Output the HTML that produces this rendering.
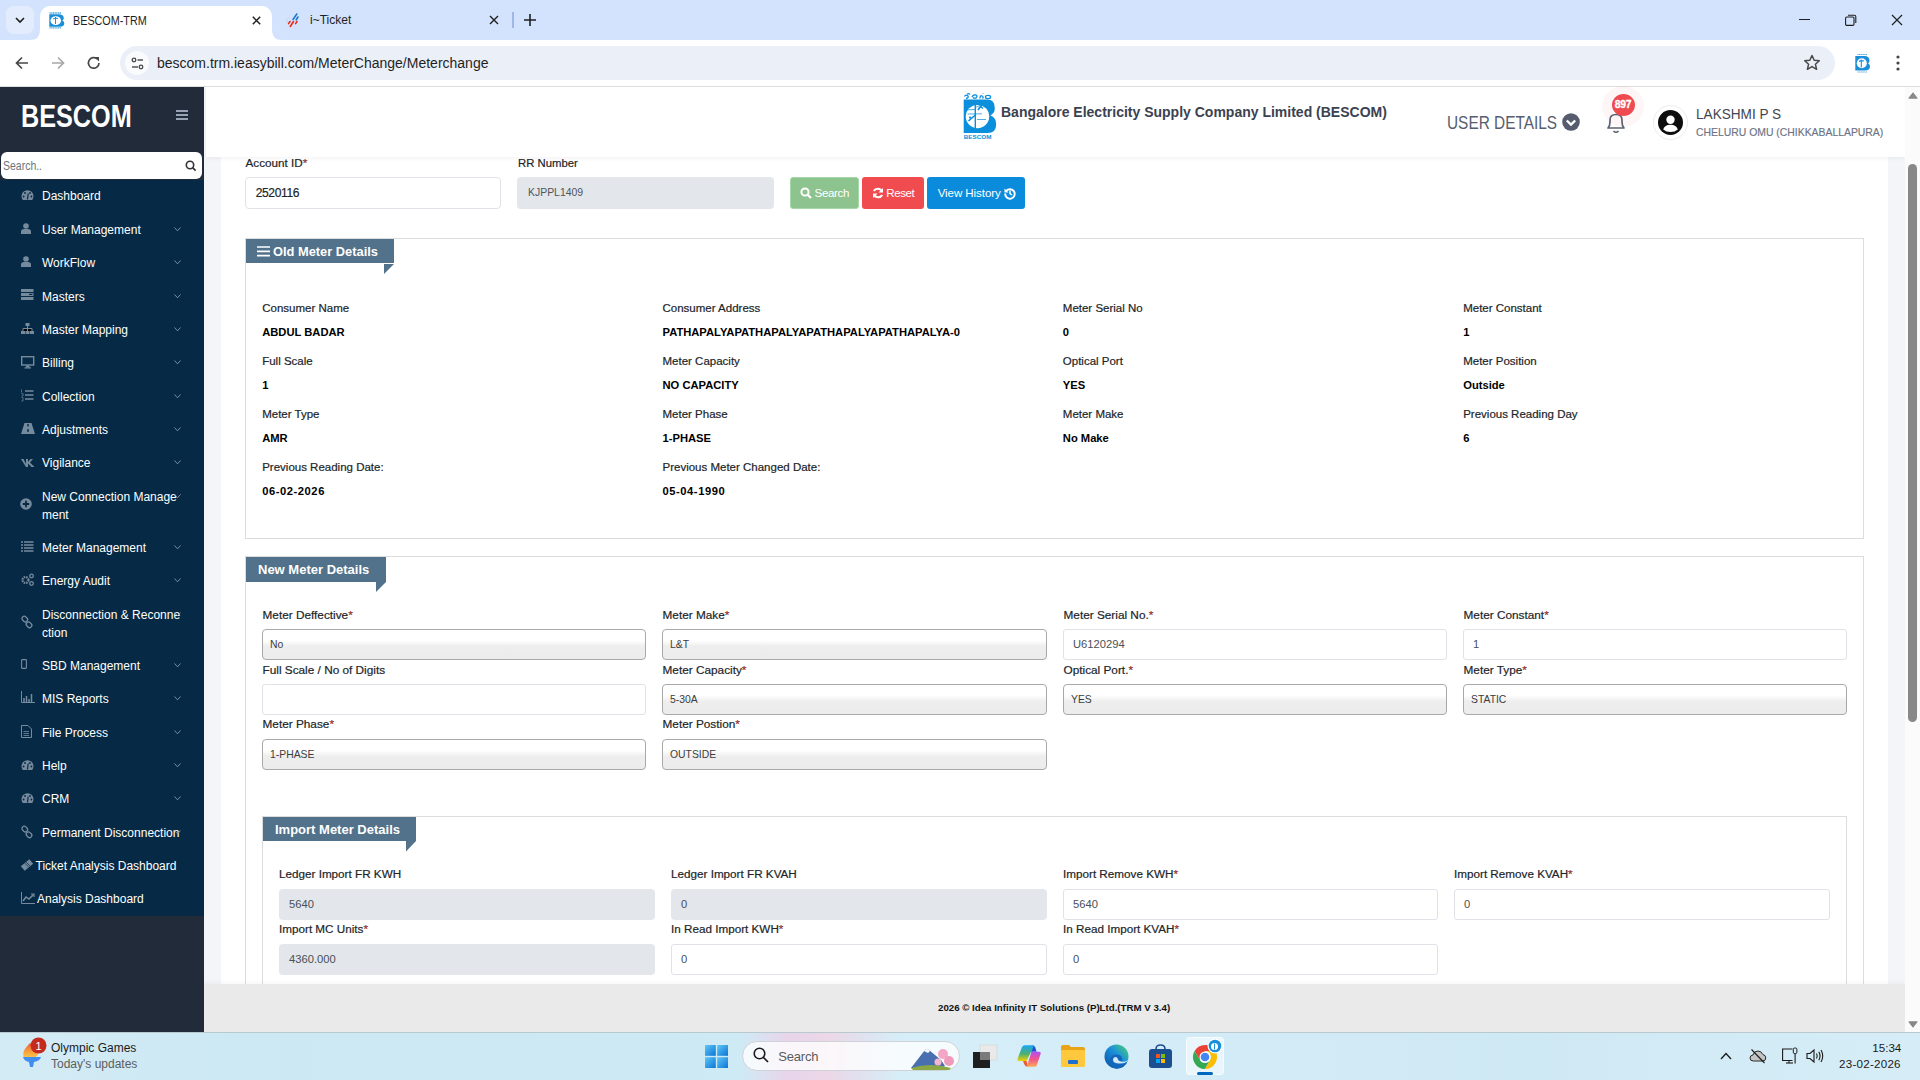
<!DOCTYPE html>
<html><head><meta charset="utf-8">
<style>
*{box-sizing:border-box;margin:0;padding:0}
html,body{width:1920px;height:1080px;overflow:hidden;font-family:"Liberation Sans",sans-serif;background:#fff;position:relative;color:#212529}
.a{position:absolute}
.t{position:absolute;white-space:nowrap;line-height:1}
svg{position:absolute;overflow:visible}
/* chrome */
#tabbar{left:0;top:0;width:1920px;height:40px;background:#d3e3fd}
#toolbar{left:0;top:40px;width:1920px;height:47px;background:#fff;border-bottom:1px solid #dcdfdc}
#omni{left:120px;top:46px;width:1715px;height:34px;border-radius:17px;background:#ebf0f8}
/* sidebar */
#sbtop{left:0;top:87px;width:204px;height:945px;background:#222b3a}
#sbmenu{left:0;top:180px;width:204px;height:736px;background:#062a45}
.mi{position:absolute;left:42px;color:#fff;font-size:12px;white-space:nowrap;line-height:18px}
.chev{position:absolute;left:173px;width:8px;height:5px}
/* main */
#main{left:204px;top:87px;width:1701px;height:897px;background:#f4f5f8}
#hdr{left:206px;top:87px;width:1699px;height:70px;background:#fff;box-shadow:0 2px 4px rgba(0,0,0,.045)}
#card{left:221px;top:157px;width:1667px;height:827px;background:#fff}
#footer{left:204px;top:984px;width:1701px;height:48px;background:#eaeaea;box-shadow:0 -2px 4px rgba(0,0,0,.035)}
#sbtrack{left:1905px;top:87px;width:15px;height:945px;background:#fbfbfb}
#taskbar{left:0;top:1032px;width:1920px;height:48px;background:linear-gradient(90deg,#d3ebf5 0%,#cbe8f3 15%,#cce9f4 35%,#d6eef8 48%,#d3ecf7 60%,#cfe9f4 80%,#d6edf7 100%)}
</style></head>
<body>
<!-- ============ CHROME ============ -->
<div id="tabbar" class="a"></div>
<div class="a" style="left:6px;top:6px;width:28px;height:28px;border-radius:8px;background:#e3ecfc"></div>
<svg style="left:15px;top:17px" width="10" height="6"><path d="M1 1 L5 5 L9 1" stroke="#1f1f1f" stroke-width="1.6" fill="none"/></svg>
<!-- active tab -->
<div class="a" style="left:40px;top:6px;width:232px;height:40px;background:#fff;border-radius:10px 10px 0 0"></div>
<svg style="left:30px;top:30px" width="10" height="10"><path d="M0 10 Q10 10 10 0 L10 10 Z" fill="#fff"/></svg>
<svg style="left:272px;top:30px" width="10" height="10"><path d="M0 0 Q0 10 10 10 L0 10 Z" fill="#fff"/></svg>
<svg style="left:48.5px;top:12px" width="16" height="17"><path d="M0.5 1 H12" stroke="#1a8fd8" stroke-width="1.3" stroke-dasharray="1.2 0.5" opacity="0.8"/><path d="M0.3 2.3 H9.5 Q14.8 2.3 14.8 6.3 Q14.8 7.8 13.4 8.4 Q15.3 9.2 15.3 11.3 Q15.3 14.8 10.5 14.8 H0.3 Z" fill="#1a8fd8"/><ellipse cx="6.8" cy="8.6" rx="5.3" ry="4.4" fill="#fff"/><path d="M6.5 5 V12 M4 7 Q6 5.5 9 6.5" stroke="#1a8fd8" stroke-width="1" fill="none"/><path d="M0.5 15.8 H12" stroke="#1a8fd8" stroke-width="1.3" stroke-dasharray="1.2 0.5" opacity="0.8"/></svg>
<div class="t" style="left:72.5px;top:14.6px;font-size:12.2px;color:#1f1f1f;transform:scaleX(0.885);transform-origin:0 0">BESCOM-TRM</div>
<svg style="left:251.5px;top:15.5px" width="9" height="9"><path d="M0.8 0.8 L8.2 8.2 M8.2 0.8 L0.8 8.2" stroke="#1f1f1f" stroke-width="1.5"/></svg>
<!-- tab 2 -->
<svg style="left:286px;top:12px" width="14" height="16"><path d="M3 5.5 Q0 7 1 11" stroke="#ccc" stroke-width="0.8" fill="none"/><path d="M10.8 2 L7 7.5 M12 5 L10.2 7.8" stroke="#1f78d1" stroke-width="1.6" stroke-linecap="round"/><path d="M4 9.5 L2.6 11.6 M7.5 9.5 L4.3 14.5 M11 9.5 L9.6 11.6" stroke="#ee2a1b" stroke-width="1.6" stroke-linecap="round"/></svg>
<div class="t" style="left:310px;top:14px;font-size:12px;color:#1f1f1f">i~Ticket</div>
<svg style="left:489px;top:15px" width="10" height="10"><path d="M1 1 L9 9 M9 1 L1 9" stroke="#1f1f1f" stroke-width="1.4"/></svg>
<div class="a" style="left:512px;top:12px;width:1.5px;height:16px;background:#9fb8e6"></div>
<svg style="left:524px;top:14px" width="12" height="12"><path d="M6 0 V12 M0 6 H12" stroke="#1f1f1f" stroke-width="1.6"/></svg>
<!-- window controls -->
<div class="a" style="left:1799px;top:19px;width:11px;height:1.2px;background:#1f1f1f"></div>
<svg style="left:1845px;top:14px" width="12" height="12"><rect x="0.6" y="3" width="8.4" height="8.4" rx="1.2" stroke="#1f1f1f" stroke-width="1.1" fill="none"/><path d="M3 1.2 H9.5 Q10.8 1.2 10.8 2.5 V9" stroke="#1f1f1f" stroke-width="1.1" fill="none"/></svg>
<svg style="left:1891px;top:14px" width="12" height="12"><path d="M1 1 L11 11 M11 1 L1 11" stroke="#1f1f1f" stroke-width="1.2"/></svg>

<!-- toolbar -->
<div id="toolbar" class="a" style="border-radius:10px 10px 0 0"></div>
<svg style="left:15px;top:56px" width="14" height="14"><path d="M13 7 H2 M7 1.5 L1.5 7 L7 12.5" stroke="#474747" stroke-width="1.7" fill="none"/></svg>
<svg style="left:51px;top:56px" width="14" height="14"><path d="M1 7 H12 M7 1.5 L12.5 7 L7 12.5" stroke="#a8a8a8" stroke-width="1.7" fill="none"/></svg>
<svg style="left:87px;top:56px" width="14" height="14"><path d="M12 7 A5.3 5.3 0 1 1 10.3 3" stroke="#474747" stroke-width="1.7" fill="none"/><path d="M7.5 1 H12 V5.5 Z" fill="#474747"/></svg>
<div id="omni" class="a"></div>
<div class="a" style="left:125px;top:51px;width:24px;height:24px;border-radius:12px;background:#fafbfd"></div>
<svg style="left:131px;top:57px" width="13" height="13"><circle cx="3" cy="3" r="1.8" stroke="#474747" stroke-width="1.3" fill="none"/><path d="M6.5 3 H12" stroke="#474747" stroke-width="1.4"/><circle cx="10" cy="10" r="1.8" stroke="#474747" stroke-width="1.3" fill="none"/><path d="M1 10 H7" stroke="#474747" stroke-width="1.4"/></svg>
<div class="t" style="left:157px;top:56px;font-size:14px;color:#1f1f1f">bescom.trm.ieasybill.com/MeterChange/Meterchange</div>
<svg style="left:1803px;top:54px" width="18" height="18"><path d="M9 1.5 L11.2 6.3 L16.3 6.8 L12.4 10.2 L13.6 15.3 L9 12.6 L4.4 15.3 L5.6 10.2 L1.7 6.8 L6.8 6.3 Z" stroke="#474747" stroke-width="1.5" fill="none" stroke-linejoin="round"/></svg>
<svg style="left:1854.5px;top:53px" width="16" height="20"><path d="M2.5 1.5 H12" stroke="#1a8fd8" stroke-width="1.2" stroke-dasharray="1.2 0.5" opacity="0.8"/><path d="M0.3 3 H9.5 Q14.5 3 14.5 7.8 Q14.5 9.4 13 10.2 Q15 11.2 15 13.5 Q15 17.5 10 17.5 H0.3 Z" fill="#1a8fd8"/><ellipse cx="6.8" cy="10.3" rx="5" ry="5" fill="#fff"/><path d="M6.3 6.5 V14.5 M4 8.5 Q6 7 9 8" stroke="#1a8fd8" stroke-width="1.1" fill="none"/><path d="M2.5 19 H12" stroke="#1a8fd8" stroke-width="1.1" stroke-dasharray="1.2 0.5" opacity="0.7"/></svg>
<svg style="left:1896px;top:55px" width="4" height="16"><circle cx="2" cy="2" r="1.6" fill="#474747"/><circle cx="2" cy="8" r="1.6" fill="#474747"/><circle cx="2" cy="14" r="1.6" fill="#474747"/></svg>

<!-- ============ SIDEBAR ============ -->
<div id="sbtop" class="a"></div>
<div id="sbmenu" class="a"></div>
<div class="t" style="left:20.5px;top:101.3px;font-size:31px;font-weight:700;color:#fff;transform:scaleX(0.813);transform-origin:0 0">BESCOM</div>
<svg style="left:176px;top:110px" width="12" height="10"><path d="M0 1 H12 M0 5 H12 M0 9 H12" stroke="#97a3b4" stroke-width="1.8"/></svg>
<div class="a" style="left:1px;top:151.8px;width:201px;height:27.4px;background:#fff;border-radius:6px"></div>
<div class="t" style="left:2.8px;top:160px;font-size:12.2px;color:#6c757d;transform:scaleX(0.86);transform-origin:0 0">Search..</div>
<svg style="left:185px;top:160px" width="12" height="12"><circle cx="5" cy="5" r="3.7" stroke="#333" stroke-width="1.6" fill="none"/><path d="M7.6 7.6 L10.6 10.6" stroke="#333" stroke-width="1.6"/></svg>
<!--MENU--><div class="t" style="left:42px;top:189.8px;font-size:12px;color:#fff">Dashboard</div>
<svg style="left:21px;top:190.0px" width="13" height="10"><path d="M1.8 10 A6 6 0 1 1 11.2 10 Z" fill="#768a9e"/><circle cx="2.6" cy="6.5" r="0.9" fill="#062a45"/><circle cx="4" cy="3" r="0.9" fill="#062a45"/><circle cx="9" cy="3" r="0.9" fill="#062a45"/><circle cx="10.4" cy="6.5" r="0.9" fill="#062a45"/><path d="M6.5 9.5 L7.2 3.5" stroke="#062a45" stroke-width="1.2"/></svg>
<div class="t" style="left:42px;top:223.8px;font-size:12px;color:#fff">User Management</div>
<svg style="left:21px;top:223.0px" width="10" height="11"><circle cx="5" cy="3" r="2.8" fill="#768a9e"/><path d="M0 11 V8.5 Q0 6 3 6 H7 Q10 6 10 8.5 V11 Z" fill="#768a9e"/></svg>
<svg style="left:174px;top:226.8px" width="7" height="5"><path d="M0.5 0.5 L3.5 3.8 L6.5 0.5" stroke="#8298ad" stroke-width="0.9" fill="none"/></svg>
<div class="t" style="left:42px;top:256.8px;font-size:12px;color:#fff">WorkFlow</div>
<svg style="left:21px;top:256.0px" width="10" height="11"><circle cx="5" cy="3" r="2.8" fill="#768a9e"/><path d="M0 11 V8.5 Q0 6 3 6 H7 Q10 6 10 8.5 V11 Z" fill="#768a9e"/></svg>
<svg style="left:174px;top:259.8px" width="7" height="5"><path d="M0.5 0.5 L3.5 3.8 L6.5 0.5" stroke="#8298ad" stroke-width="0.9" fill="none"/></svg>
<div class="t" style="left:42px;top:290.5px;font-size:12px;color:#fff">Masters</div>
<svg style="left:21px;top:289.2px" width="13" height="11"><rect x="0" y="0" width="12.5" height="3" fill="#768a9e"/><rect x="0" y="4" width="12.5" height="3" fill="#768a9e"/><rect x="0" y="8" width="12.5" height="3" fill="#768a9e"/><rect x="8" y="4.8" width="3.5" height="1.2" fill="#062a45"/></svg>
<svg style="left:174px;top:293.5px" width="7" height="5"><path d="M0.5 0.5 L3.5 3.8 L6.5 0.5" stroke="#8298ad" stroke-width="0.9" fill="none"/></svg>
<div class="t" style="left:42px;top:323.5px;font-size:12px;color:#fff">Master Mapping</div>
<svg style="left:21px;top:322.7px" width="13" height="11"><rect x="4.5" y="0" width="4" height="3" fill="#768a9e"/><path d="M6.5 3 V5 M2 8 V5.5 H11 V8 M6.5 5 V8" stroke="#768a9e" stroke-width="1"/><rect x="0" y="8" width="4" height="3" fill="#768a9e"/><rect x="4.5" y="8" width="4" height="3" fill="#768a9e"/><rect x="9" y="8" width="4" height="3" fill="#768a9e"/></svg>
<svg style="left:174px;top:326.5px" width="7" height="5"><path d="M0.5 0.5 L3.5 3.8 L6.5 0.5" stroke="#8298ad" stroke-width="0.9" fill="none"/></svg>
<div class="t" style="left:42px;top:356.8px;font-size:12px;color:#fff">Billing</div>
<svg style="left:21px;top:355.5px" width="14" height="13"><rect x="0.7" y="0.7" width="12" height="8.3" stroke="#768a9e" stroke-width="1.4" fill="none"/><rect x="5" y="9.5" width="3.5" height="2" fill="#768a9e"/><rect x="3.5" y="11.3" width="6.5" height="1.2" fill="#768a9e"/></svg>
<svg style="left:174px;top:359.8px" width="7" height="5"><path d="M0.5 0.5 L3.5 3.8 L6.5 0.5" stroke="#8298ad" stroke-width="0.9" fill="none"/></svg>
<div class="t" style="left:42px;top:390.5px;font-size:12px;color:#fff">Collection</div>
<svg style="left:21px;top:389.2px" width="13" height="13"><path d="M4 2 H12.5 M4 6 H12.5 M4 10 H12.5" stroke="#768a9e" stroke-width="1.6"/><path d="M0.5 0.5 V3.5 M0.5 4.5 H2 V7 H0.5 M0.5 8.5 H2 V12 H0.5" stroke="#768a9e" stroke-width="0.7" fill="none"/></svg>
<svg style="left:174px;top:393.5px" width="7" height="5"><path d="M0.5 0.5 L3.5 3.8 L6.5 0.5" stroke="#8298ad" stroke-width="0.9" fill="none"/></svg>
<div class="t" style="left:42px;top:423.5px;font-size:12px;color:#fff">Adjustments</div>
<svg style="left:21px;top:422.7px" width="14" height="11"><path d="M3.5 0 H10.5 L14 11 H0 Z" fill="#768a9e"/><rect x="6.3" y="1" width="1.4" height="2.5" fill="#062a45"/><rect x="6.3" y="6" width="1.4" height="3" fill="#062a45"/></svg>
<svg style="left:174px;top:426.5px" width="7" height="5"><path d="M0.5 0.5 L3.5 3.8 L6.5 0.5" stroke="#8298ad" stroke-width="0.9" fill="none"/></svg>
<div class="t" style="left:42px;top:456.8px;font-size:12px;color:#fff">Vigilance</div>
<svg style="left:21px;top:458.5px" width="14" height="8"><path d="M0 0 H2.5 L5 5 V0 H7 V3 L9.5 0 H12 L9 3.5 L13.5 8 H10.5 L7 4.5 V8 H5 Z" fill="#768a9e"/></svg>
<svg style="left:174px;top:459.8px" width="7" height="5"><path d="M0.5 0.5 L3.5 3.8 L6.5 0.5" stroke="#8298ad" stroke-width="0.9" fill="none"/></svg>
<div class="mi" style="left:42px;top:487.8px">New Connection Manage<br>ment</div>
<svg style="left:20px;top:498.0px" width="12" height="12"><circle cx="6" cy="6" r="5.8" fill="#768a9e"/><path d="M6 2.8 V9.2 M2.8 6 H9.2" stroke="#062a45" stroke-width="1.8"/></svg>
<svg style="left:174px;top:493.8px" width="7" height="5"><path d="M0.5 0.5 L3.5 3.8 L6.5 0.5" stroke="#8298ad" stroke-width="0.9" fill="none"/></svg>
<div class="t" style="left:42px;top:541.8px;font-size:12px;color:#fff">Meter Management</div>
<svg style="left:21px;top:540.5px" width="13" height="12"><path d="M0 1 H2 M0 4 H2 M0 7 H2 M0 10 H2 M3 1 H12.5 M3 4 H12.5 M3 7 H12.5 M3 10 H12.5" stroke="#768a9e" stroke-width="1.6"/></svg>
<svg style="left:174px;top:544.8px" width="7" height="5"><path d="M0.5 0.5 L3.5 3.8 L6.5 0.5" stroke="#8298ad" stroke-width="0.9" fill="none"/></svg>
<div class="t" style="left:42px;top:574.8px;font-size:12px;color:#fff">Energy Audit</div>
<svg style="left:21px;top:573.0px" width="13" height="13"><circle cx="4.5" cy="7" r="3" stroke="#768a9e" stroke-width="2.2" fill="none" stroke-dasharray="1.6 0.8"/><circle cx="10.5" cy="3" r="1.8" stroke="#768a9e" stroke-width="1.3" fill="none"/><circle cx="10.5" cy="10.5" r="1.8" stroke="#768a9e" stroke-width="1.3" fill="none"/></svg>
<svg style="left:174px;top:577.8px" width="7" height="5"><path d="M0.5 0.5 L3.5 3.8 L6.5 0.5" stroke="#8298ad" stroke-width="0.9" fill="none"/></svg>
<div class="mi" style="left:42px;top:605.8px">Disconnection &amp; Reconne<br>ction</div>
<svg style="left:21px;top:616.0px" width="12" height="12"><rect x="0.8" y="0.8" width="6" height="4.5" rx="2.2" transform="rotate(45 3.8 3)" stroke="#768a9e" stroke-width="1.3" fill="none"/><rect x="5" y="6.5" width="6" height="4.5" rx="2.2" transform="rotate(45 8 8.8)" stroke="#768a9e" stroke-width="1.3" fill="none"/></svg>
<svg style="left:174px;top:611.8px" width="7" height="5"><path d="M0.5 0.5 L3.5 3.8 L6.5 0.5" stroke="#8298ad" stroke-width="0.9" fill="none"/></svg>
<div class="t" style="left:42px;top:659.8px;font-size:12px;color:#fff">SBD Management</div>
<svg style="left:21px;top:659.0px" width="6" height="10"><rect x="0.6" y="0.6" width="4.8" height="8.8" rx="0.6" stroke="#768a9e" stroke-width="1.1" fill="none"/></svg>
<svg style="left:174px;top:662.8px" width="7" height="5"><path d="M0.5 0.5 L3.5 3.8 L6.5 0.5" stroke="#8298ad" stroke-width="0.9" fill="none"/></svg>
<div class="t" style="left:42px;top:692.8px;font-size:12px;color:#fff">MIS Reports</div>
<svg style="left:21px;top:691.0px" width="14" height="12"><path d="M0.5 0 V11.5 H14" stroke="#768a9e" stroke-width="1" fill="none"/><path d="M3 11 V7 M5.5 11 V5 M8 11 V8 M10.5 11 V3" stroke="#768a9e" stroke-width="1.5"/></svg>
<svg style="left:174px;top:695.8px" width="7" height="5"><path d="M0.5 0.5 L3.5 3.8 L6.5 0.5" stroke="#8298ad" stroke-width="0.9" fill="none"/></svg>
<div class="t" style="left:42px;top:726.8px;font-size:12px;color:#fff">File Process</div>
<svg style="left:21px;top:725.0px" width="11" height="13"><path d="M0.5 0.5 H7 L10.5 4 V12.5 H0.5 Z" stroke="#768a9e" stroke-width="1" fill="none"/><path d="M2.5 6.5 H8 M2.5 8.5 H8 M2.5 10.5 H8" stroke="#768a9e" stroke-width="0.8"/></svg>
<svg style="left:174px;top:729.8px" width="7" height="5"><path d="M0.5 0.5 L3.5 3.8 L6.5 0.5" stroke="#8298ad" stroke-width="0.9" fill="none"/></svg>
<div class="t" style="left:42px;top:759.8px;font-size:12px;color:#fff">Help</div>
<svg style="left:21px;top:760.0px" width="13" height="10"><path d="M1.8 10 A6 6 0 1 1 11.2 10 Z" fill="#768a9e"/><circle cx="2.6" cy="6.5" r="0.9" fill="#062a45"/><circle cx="4" cy="3" r="0.9" fill="#062a45"/><circle cx="9" cy="3" r="0.9" fill="#062a45"/><circle cx="10.4" cy="6.5" r="0.9" fill="#062a45"/><path d="M6.5 9.5 L7.2 3.5" stroke="#062a45" stroke-width="1.2"/></svg>
<svg style="left:174px;top:762.8px" width="7" height="5"><path d="M0.5 0.5 L3.5 3.8 L6.5 0.5" stroke="#8298ad" stroke-width="0.9" fill="none"/></svg>
<div class="t" style="left:42px;top:792.8px;font-size:12px;color:#fff">CRM</div>
<svg style="left:21px;top:793.0px" width="13" height="10"><path d="M1.8 10 A6 6 0 1 1 11.2 10 Z" fill="#768a9e"/><circle cx="2.6" cy="6.5" r="0.9" fill="#062a45"/><circle cx="4" cy="3" r="0.9" fill="#062a45"/><circle cx="9" cy="3" r="0.9" fill="#062a45"/><circle cx="10.4" cy="6.5" r="0.9" fill="#062a45"/><path d="M6.5 9.5 L7.2 3.5" stroke="#062a45" stroke-width="1.2"/></svg>
<svg style="left:174px;top:795.8px" width="7" height="5"><path d="M0.5 0.5 L3.5 3.8 L6.5 0.5" stroke="#8298ad" stroke-width="0.9" fill="none"/></svg>
<div class="t" style="left:42px;top:826.8px;font-size:12px;color:#fff">Permanent Disconnection</div>
<svg style="left:21px;top:825.5px" width="12" height="12"><rect x="0.8" y="0.8" width="6" height="4.5" rx="2.2" transform="rotate(45 3.8 3)" stroke="#768a9e" stroke-width="1.3" fill="none"/><rect x="5" y="6.5" width="6" height="4.5" rx="2.2" transform="rotate(45 8 8.8)" stroke="#768a9e" stroke-width="1.3" fill="none"/></svg>
<svg style="left:174px;top:829.8px" width="7" height="5"><path d="M0.5 0.5 L3.5 3.8 L6.5 0.5" stroke="#8298ad" stroke-width="0.9" fill="none"/></svg>
<div class="t" style="left:35.5px;top:859.8px;font-size:12px;color:#fff">Ticket Analysis Dashboard</div>
<svg style="left:21px;top:858.5px" width="12" height="12"><rect x="0.5" y="3" width="11" height="6" transform="rotate(-40 6 6)" fill="#768a9e"/><path d="M3.8 4.2 L7.8 8.2 M5 3 L9 7" stroke="#062a45" stroke-width="0.7"/></svg>
<div class="t" style="left:37px;top:892.8px;font-size:12px;color:#fff">Analysis Dashboard</div>
<svg style="left:21px;top:892.0px" width="14" height="12"><path d="M0.5 0 V11.5 H14" stroke="#768a9e" stroke-width="1" fill="none"/><path d="M2 9 L5 5 L8 7 L12.5 2.5" stroke="#768a9e" stroke-width="1.5" fill="none"/><path d="M10 2 H13 V5" stroke="#768a9e" stroke-width="1.2" fill="none"/></svg><!--/MENU-->

<!-- ============ MAIN ============ -->
<div id="main" class="a"></div>
<div id="card" class="a"></div>
<div id="hdr" class="a"></div>
<!--HEADER-->
<!--CONTENT--><svg style="left:963px;top:93px" width="36" height="48">
<g fill="none" stroke="#0a8fdc" stroke-width="1.3">
<path d="M1.5 3.5 Q3 1 5 3 Q6 5 3 5.5 M4 1 Q6 0 7 1.5"/>
<path d="M9 4 Q10 1.5 13 2 Q15 3 13 5 Q11 5.5 10 4.5"/>
<path d="M17 5.5 Q17 2 19 3 Q21 4 19.5 5.5 M20 1 V0.5"/>
<ellipse cx="25" cy="4" rx="2.6" ry="1.6"/>
</g>
<path d="M0.7 6.6 H24.5 Q31.8 6.6 31.8 15.2 Q31.8 20 27.4 22.4 Q33.2 24.5 33.2 31.2 Q33.2 40.1 24.5 40.1 H0.7 Z" fill="#0a8fdc"/>
<circle cx="14.5" cy="23.6" r="11.7" fill="#fff"/>
<path d="M12.3 11.8 V35.3" stroke="#0a8fdc" stroke-width="1.4"/>
<path d="M4 16.8 L12 16.5 M4.5 21 L19 20.8 M14 26.5 H23 M12.5 14.5 L18 12" stroke="#0a8fdc" stroke-width="0.9" opacity="0.8"/>
<path d="M5.5 28 L10 24 L13 21.5 M15 17 L17.5 13.5 L20 15.5" stroke="#0a8fdc" stroke-width="1.6" fill="none"/>
<circle cx="7" cy="24.5" r="1.1" fill="#0a8fdc"/><circle cx="18" cy="12.5" r="1.1" fill="#0a8fdc"/>
<text x="0.7" y="45.9" font-size="5.9" font-family="Liberation Sans" font-weight="700" fill="#0a8fdc" textLength="27.7" lengthAdjust="spacingAndGlyphs">BESCOM</text>
</svg>
<div class="t" style="left:1001px;top:104.95px;font-size:14px;font-weight:700;color:#3b4250;">Bangalore Electricity Supply Company Limited (BESCOM)</div>
<div class="t" style="left:1447px;top:113.56px;font-size:18.6px;color:#575d6e;transform:scaleX(0.828);transform-origin:0 0">USER DETAILS</div>
<svg style="left:1562px;top:112.5px" width="18" height="18"><circle cx="9" cy="9" r="8.8" fill="#565c6d"/><path d="M4.8 7.5 L9 11.5 L13.2 7.5" stroke="#fff" stroke-width="2.4" fill="none"/></svg>
<div class="a" style="left:1602px;top:86px;width:42px;height:41px;border-radius:50%;background:rgba(240,80,80,0.05)"></div>
<svg style="left:1605px;top:110px" width="22" height="24"><path d="M3 18 Q5 16 5 12 V10 Q5 4.5 11 4.5 Q17 4.5 17 10 V12 Q17 16 19 18 Z" stroke="#5b6172" stroke-width="1.7" fill="none" stroke-linejoin="round"/><path d="M8.5 21 Q11 23.5 13.5 21" stroke="#5b6172" stroke-width="1.6" fill="none"/></svg>
<div class="a" style="left:1612px;top:94px;width:23px;height:22px;border-radius:50%;background:#ef4a50"></div>
<div class="t" style="left:1614.8px;top:100.28px;font-size:10.3px;font-weight:700;color:#fff;letter-spacing:-0.3px;-webkit-text-stroke:0.35px #fff">897</div>
<div class="a" style="left:1652.5px;top:104.5px;width:35px;height:35px;border-radius:50%;border:1px solid #ececec;background:#fff"></div>
<svg style="left:1657.5px;top:109.5px" width="25" height="25"><circle cx="12.5" cy="12.5" r="12.5" fill="#0d0d0d"/><circle cx="12.5" cy="9.8" r="4.2" fill="#fff"/><path d="M5.2 19.5 Q6.5 14.8 12.5 14.8 Q18.5 14.8 19.8 19.5 Q16.8 22 12.5 22 Q8.2 22 5.2 19.5 Z" fill="#fff"/></svg>
<div class="t" style="left:1696px;top:107.41px;font-size:14.4px;color:#3f4552;transform:scaleX(0.945);transform-origin:0 0">LAKSHMI P S</div>
<div class="t" style="left:1696px;top:127.37px;font-size:10.9px;color:#6c7284;transform:scaleX(0.955);transform-origin:0 0;-webkit-text-stroke:0.15px #6c7284">CHELURU OMU (CHIKKABALLAPURA)</div>
<div class="t" style="left:245.5px;top:156.70px;font-size:11.7px;color:#212529;;-webkit-text-stroke:0.2px #212529">Account ID<span style="color:#e3342f">*</span></div>
<div class="a" style="left:245px;top:177px;width:256px;height:32px;border:1px solid #dfe3e8;border-radius:4px;background:#fff"></div>
<div class="t" style="left:255.7px;top:187.14px;font-size:12px;color:#212529;letter-spacing:-0.35px;-webkit-text-stroke:0.2px #212529">2520116</div>
<div class="t" style="left:517.5px;top:156.70px;font-size:11.7px;color:#212529;transform:scaleX(0.97);transform-origin:0 0;-webkit-text-stroke:0.2px #212529">RR Number</div>
<div class="a" style="left:517px;top:177px;width:257px;height:32px;border-radius:4px;background:#e3e6ea"></div>
<div class="t" style="left:527.5px;top:187.21px;font-size:11.8px;color:#50555c;transform:scaleX(0.885);transform-origin:0 0">KJPPL1409</div>
<div class="a" style="left:790px;top:177px;width:69px;height:32px;border-radius:3px;background:#8dc38f;border:1px solid #a6d8a8"></div>
<svg style="left:800px;top:187px" width="12" height="12"><circle cx="5" cy="5" r="3.6" stroke="#fff" stroke-width="2" fill="none"/><path d="M7.6 7.6 L11 11" stroke="#fff" stroke-width="2.2"/></svg>
<div class="t" style="left:814.5px;top:187.18px;font-size:11.6px;color:#fff;letter-spacing:-0.35px">Search</div>
<div class="a" style="left:862px;top:177px;width:62px;height:32px;border-radius:3px;background:#f04b4f"></div>
<svg style="left:872px;top:187px" width="12" height="12"><path d="M10 4.5 A4.6 4.6 0 0 0 1.8 4" stroke="#fff" stroke-width="2" fill="none"/><path d="M11 1 V5.5 H6.5 Z" fill="#fff"/><path d="M2 7.5 A4.6 4.6 0 0 0 10.2 8" stroke="#fff" stroke-width="2" fill="none"/><path d="M1 11 V6.5 H5.5 Z" fill="#fff"/></svg>
<div class="t" style="left:886.3px;top:187.18px;font-size:11.6px;color:#fff;letter-spacing:-0.45px">Reset</div>
<div class="a" style="left:927px;top:177px;width:98px;height:32px;border-radius:3px;background:#0b8bdb"></div>
<div class="t" style="left:937.7px;top:187.18px;font-size:11.6px;color:#fff;letter-spacing:-0.1px">View History</div>
<svg style="left:1003.5px;top:186.5px" width="12" height="12"><path d="M2.2 4 A4.8 4.8 0 1 1 1.2 6.5" stroke="#fff" stroke-width="2" fill="none"/><path d="M0.5 1.5 V5.5 H4.5 Z" fill="#fff"/><path d="M6 3.5 V6.5 L8 8" stroke="#fff" stroke-width="1.5" fill="none"/></svg>
<div class="a" style="left:245px;top:238px;width:1619px;height:301px;border:1px solid #dcdcdc"></div>
<div class="a" style="left:246px;top:239px;width:148px;height:24px;background:#52718a"></div>
<svg style="left:384px;top:264px" width="10" height="10"><path d="M0 0 H10 L0 10 Z" fill="#52718a"/></svg>
<svg style="left:257.3px;top:245.8px" width="13" height="11"><path d="M0 1 H13 M0 5.3 H13 M0 9.6 H13" stroke="#fff" stroke-width="1.7"/></svg>
<div class="t" style="left:273.1px;top:244.74px;font-size:13.3px;font-weight:700;color:#fff;transform:scaleX(0.966);transform-origin:0 0">Old Meter Details</div>
<div class="t" style="left:262.2px;top:302.67px;font-size:11.5px;color:#212529;;-webkit-text-stroke:0.2px #212529">Consumer Name</div>
<div class="t" style="left:262.2px;top:326.92px;font-size:11.2px;font-weight:700;color:#000;">ABDUL BADAR</div>
<div class="t" style="left:662.5px;top:302.67px;font-size:11.5px;color:#212529;;-webkit-text-stroke:0.2px #212529">Consumer Address</div>
<div class="t" style="left:662.5px;top:326.92px;font-size:11.2px;font-weight:700;color:#000;">PATHAPALYAPATHAPALYAPATHAPALYAPATHAPALYA-0</div>
<div class="t" style="left:1062.8px;top:302.67px;font-size:11.5px;color:#212529;;-webkit-text-stroke:0.2px #212529">Meter Serial No</div>
<div class="t" style="left:1062.8px;top:326.92px;font-size:11.2px;font-weight:700;color:#000;">0</div>
<div class="t" style="left:1463.2px;top:302.67px;font-size:11.5px;color:#212529;;-webkit-text-stroke:0.2px #212529">Meter Constant</div>
<div class="t" style="left:1463.2px;top:326.92px;font-size:11.2px;font-weight:700;color:#000;">1</div>
<div class="t" style="left:262.2px;top:355.67px;font-size:11.5px;color:#212529;;-webkit-text-stroke:0.2px #212529">Full Scale</div>
<div class="t" style="left:262.2px;top:379.92px;font-size:11.2px;font-weight:700;color:#000;">1</div>
<div class="t" style="left:662.5px;top:355.67px;font-size:11.5px;color:#212529;;-webkit-text-stroke:0.2px #212529">Meter Capacity</div>
<div class="t" style="left:662.5px;top:379.92px;font-size:11.2px;font-weight:700;color:#000;">NO CAPACITY</div>
<div class="t" style="left:1062.8px;top:355.67px;font-size:11.5px;color:#212529;;-webkit-text-stroke:0.2px #212529">Optical Port</div>
<div class="t" style="left:1062.8px;top:379.92px;font-size:11.2px;font-weight:700;color:#000;">YES</div>
<div class="t" style="left:1463.2px;top:355.67px;font-size:11.5px;color:#212529;;-webkit-text-stroke:0.2px #212529">Meter Position</div>
<div class="t" style="left:1463.2px;top:379.92px;font-size:11.2px;font-weight:700;color:#000;">Outside</div>
<div class="t" style="left:262.2px;top:408.67px;font-size:11.5px;color:#212529;;-webkit-text-stroke:0.2px #212529">Meter Type</div>
<div class="t" style="left:262.2px;top:432.92px;font-size:11.2px;font-weight:700;color:#000;">AMR</div>
<div class="t" style="left:662.5px;top:408.67px;font-size:11.5px;color:#212529;;-webkit-text-stroke:0.2px #212529">Meter Phase</div>
<div class="t" style="left:662.5px;top:432.92px;font-size:11.2px;font-weight:700;color:#000;">1-PHASE</div>
<div class="t" style="left:1062.8px;top:408.67px;font-size:11.5px;color:#212529;;-webkit-text-stroke:0.2px #212529">Meter Make</div>
<div class="t" style="left:1062.8px;top:432.92px;font-size:11.2px;font-weight:700;color:#000;">No Make</div>
<div class="t" style="left:1463.2px;top:408.67px;font-size:11.5px;color:#212529;;-webkit-text-stroke:0.2px #212529">Previous Reading Day</div>
<div class="t" style="left:1463.2px;top:432.92px;font-size:11.2px;font-weight:700;color:#000;">6</div>
<div class="t" style="left:262.2px;top:461.67px;font-size:11.5px;color:#212529;;-webkit-text-stroke:0.2px #212529">Previous Reading Date:</div>
<div class="t" style="left:262.2px;top:485.92px;font-size:11.2px;font-weight:700;color:#000;letter-spacing:0.55px">06-02-2026</div>
<div class="t" style="left:662.5px;top:461.67px;font-size:11.5px;color:#212529;;-webkit-text-stroke:0.2px #212529">Previous Meter Changed Date:</div>
<div class="t" style="left:662.5px;top:485.92px;font-size:11.2px;font-weight:700;color:#000;letter-spacing:0.55px">05-04-1990</div>
<div class="a" style="left:245px;top:556px;width:1619px;height:600px;border:1px solid #dcdcdc"></div>
<div class="a" style="left:246px;top:557px;width:140px;height:25px;background:#52718a"></div>
<svg style="left:376px;top:582px" width="10" height="10"><path d="M0 0 H10 L0 10 Z" fill="#52718a"/></svg>
<div class="t" style="left:258px;top:562.60px;font-size:13px;font-weight:700;color:#fff;">New Meter Details</div>
<div class="t" style="left:262.5px;top:609.51px;font-size:11.8px;color:#212529;;-webkit-text-stroke:0.2px #212529">Meter Deffective<span style="color:#e3342f">*</span></div>
<div class="a" style="left:262px;top:629px;width:384px;height:31px;border:1px solid #a9a9a9;border-radius:4px;background:linear-gradient(#ffffff 0%,#ffffff 36%,#eeeeee 56%,#ececec 100%)"></div>
<div class="t" style="left:270.3px;top:638.61px;font-size:11.8px;color:#3c3c3c;transform:scaleX(0.88);transform-origin:0 0">No</div>
<div class="t" style="left:662.5px;top:609.51px;font-size:11.8px;color:#212529;;-webkit-text-stroke:0.2px #212529">Meter Make<span style="color:#e3342f">*</span></div>
<div class="a" style="left:662px;top:629px;width:385px;height:31px;border:1px solid #a9a9a9;border-radius:4px;background:linear-gradient(#ffffff 0%,#ffffff 36%,#eeeeee 56%,#ececec 100%)"></div>
<div class="t" style="left:670.3px;top:638.61px;font-size:11.8px;color:#3c3c3c;transform:scaleX(0.88);transform-origin:0 0">L&amp;T</div>
<div class="t" style="left:1063.5px;top:609.51px;font-size:11.8px;color:#212529;;-webkit-text-stroke:0.2px #212529">Meter Serial No.<span style="color:#e3342f">*</span></div>
<div class="a" style="left:1063px;top:629px;width:384px;height:31px;border:1px solid #dfe3e8;border-radius:3px;background:#fff"></div>
<div class="t" style="left:1073px;top:638.52px;font-size:11.2px;color:#495057;">U6120294</div>
<div class="t" style="left:1463.5px;top:609.51px;font-size:11.8px;color:#212529;;-webkit-text-stroke:0.2px #212529">Meter Constant<span style="color:#e3342f">*</span></div>
<div class="a" style="left:1463px;top:629px;width:384px;height:31px;border:1px solid #dfe3e8;border-radius:3px;background:#fff"></div>
<div class="t" style="left:1473px;top:638.52px;font-size:11.2px;color:#495057;">1</div>
<div class="t" style="left:262.5px;top:664.71px;font-size:11.8px;color:#212529;;-webkit-text-stroke:0.2px #212529">Full Scale / No of Digits</div>
<div class="a" style="left:262px;top:684px;width:384px;height:31px;border:1px solid #dfe3e8;border-radius:3px;background:#fff"></div>
<div class="t" style="left:272px;top:693.52px;font-size:11.2px;color:#495057;"></div>
<div class="t" style="left:662.5px;top:664.71px;font-size:11.8px;color:#212529;;-webkit-text-stroke:0.2px #212529">Meter Capacity<span style="color:#e3342f">*</span></div>
<div class="a" style="left:662px;top:684px;width:385px;height:31px;border:1px solid #a9a9a9;border-radius:4px;background:linear-gradient(#ffffff 0%,#ffffff 36%,#eeeeee 56%,#ececec 100%)"></div>
<div class="t" style="left:670.3px;top:693.61px;font-size:11.8px;color:#3c3c3c;transform:scaleX(0.88);transform-origin:0 0">5-30A</div>
<div class="t" style="left:1063.5px;top:664.71px;font-size:11.8px;color:#212529;;-webkit-text-stroke:0.2px #212529">Optical Port.<span style="color:#e3342f">*</span></div>
<div class="a" style="left:1063px;top:684px;width:384px;height:31px;border:1px solid #a9a9a9;border-radius:4px;background:linear-gradient(#ffffff 0%,#ffffff 36%,#eeeeee 56%,#ececec 100%)"></div>
<div class="t" style="left:1071.3px;top:693.61px;font-size:11.8px;color:#3c3c3c;transform:scaleX(0.88);transform-origin:0 0">YES</div>
<div class="t" style="left:1463.5px;top:664.71px;font-size:11.8px;color:#212529;;-webkit-text-stroke:0.2px #212529">Meter Type<span style="color:#e3342f">*</span></div>
<div class="a" style="left:1463px;top:684px;width:384px;height:31px;border:1px solid #a9a9a9;border-radius:4px;background:linear-gradient(#ffffff 0%,#ffffff 36%,#eeeeee 56%,#ececec 100%)"></div>
<div class="t" style="left:1471.3px;top:693.61px;font-size:11.8px;color:#3c3c3c;transform:scaleX(0.88);transform-origin:0 0">STATIC</div>
<div class="t" style="left:262.5px;top:718.71px;font-size:11.8px;color:#212529;;-webkit-text-stroke:0.2px #212529">Meter Phase<span style="color:#e3342f">*</span></div>
<div class="a" style="left:262px;top:739px;width:384px;height:31px;border:1px solid #a9a9a9;border-radius:4px;background:linear-gradient(#ffffff 0%,#ffffff 36%,#eeeeee 56%,#ececec 100%)"></div>
<div class="t" style="left:270.3px;top:748.61px;font-size:11.8px;color:#3c3c3c;transform:scaleX(0.88);transform-origin:0 0">1-PHASE</div>
<div class="t" style="left:662.5px;top:718.71px;font-size:11.8px;color:#212529;;-webkit-text-stroke:0.2px #212529">Meter Postion<span style="color:#e3342f">*</span></div>
<div class="a" style="left:662px;top:739px;width:385px;height:31px;border:1px solid #a9a9a9;border-radius:4px;background:linear-gradient(#ffffff 0%,#ffffff 36%,#eeeeee 56%,#ececec 100%)"></div>
<div class="t" style="left:670.3px;top:748.61px;font-size:11.8px;color:#3c3c3c;transform:scaleX(0.88);transform-origin:0 0">OUTSIDE</div>
<div class="a" style="left:262px;top:816px;width:1585px;height:400px;border:1px solid #dcdcdc"></div>
<div class="a" style="left:263px;top:817px;width:153px;height:24px;background:#52718a"></div>
<svg style="left:406px;top:841px" width="10" height="11"><path d="M0 0 H10 L0 10.5 Z" fill="#52718a"/></svg>
<div class="t" style="left:275px;top:822.60px;font-size:13px;font-weight:700;color:#fff;">Import Meter Details</div>
<div class="t" style="left:279px;top:867.70px;font-size:11.7px;color:#212529;;-webkit-text-stroke:0.2px #212529">Ledger Import FR KWH</div>
<div class="a" style="left:279px;top:889px;width:376px;height:31px;border-radius:4px;background:#e3e6ea"></div>
<div class="t" style="left:289px;top:899.02px;font-size:11.2px;color:#495057;">5640</div>
<div class="t" style="left:671px;top:867.70px;font-size:11.7px;color:#212529;;-webkit-text-stroke:0.2px #212529">Ledger Import FR KVAH</div>
<div class="a" style="left:671px;top:889px;width:376px;height:31px;border-radius:4px;background:#e3e6ea"></div>
<div class="t" style="left:681px;top:899.02px;font-size:11.2px;color:#495057;">0</div>
<div class="t" style="left:1063px;top:867.70px;font-size:11.7px;color:#212529;;-webkit-text-stroke:0.2px #212529">Import Remove KWH<span style="color:#e3342f">*</span></div>
<div class="a" style="left:1063px;top:889px;width:375px;height:31px;border:1px solid #dfe3e8;border-radius:3px;background:#fff"></div>
<div class="t" style="left:1073px;top:899.02px;font-size:11.2px;color:#495057;">5640</div>
<div class="t" style="left:1454px;top:867.70px;font-size:11.7px;color:#212529;;-webkit-text-stroke:0.2px #212529">Import Remove KVAH<span style="color:#e3342f">*</span></div>
<div class="a" style="left:1454px;top:889px;width:376px;height:31px;border:1px solid #dfe3e8;border-radius:3px;background:#fff"></div>
<div class="t" style="left:1464px;top:899.02px;font-size:11.2px;color:#495057;">0</div>
<div class="t" style="left:279px;top:923.10px;font-size:11.7px;color:#212529;;-webkit-text-stroke:0.2px #212529">Import MC Units<span style="color:#e3342f">*</span></div>
<div class="a" style="left:279px;top:944px;width:376px;height:31px;border-radius:4px;background:#e3e6ea"></div>
<div class="t" style="left:289px;top:954.02px;font-size:11.2px;color:#495057;">4360.000</div>
<div class="t" style="left:671px;top:923.10px;font-size:11.7px;color:#212529;;-webkit-text-stroke:0.2px #212529">In Read Import KWH<span style="color:#e3342f">*</span></div>
<div class="a" style="left:671px;top:944px;width:376px;height:31px;border:1px solid #dfe3e8;border-radius:3px;background:#fff"></div>
<div class="t" style="left:681px;top:954.02px;font-size:11.2px;color:#495057;">0</div>
<div class="t" style="left:1063px;top:923.10px;font-size:11.7px;color:#212529;;-webkit-text-stroke:0.2px #212529">In Read Import KVAH<span style="color:#e3342f">*</span></div>
<div class="a" style="left:1063px;top:944px;width:375px;height:31px;border:1px solid #dfe3e8;border-radius:3px;background:#fff"></div>
<div class="t" style="left:1073px;top:954.02px;font-size:11.2px;color:#495057;">0</div><!--/CONTENT-->
<div id="footer" class="a"></div>
<div class="t" style="left:938px;top:1002.7px;font-size:9.7px;font-weight:700;color:#111">2026 © Idea Infinity IT Solutions (P)Ltd.(TRM V 3.4)</div>
<div id="sbtrack" class="a"></div>
<svg style="left:1907.5px;top:92px" width="10" height="7"><path d="M0.8 6.2 L5 0.8 L9.2 6.2 Z" fill="#888" stroke="#888" stroke-width="1" stroke-linejoin="round"/></svg>
<div class="a" style="left:1908px;top:164px;width:9px;height:558px;border-radius:5px;background:#888"></div>
<svg style="left:1907.5px;top:1021px" width="10" height="7"><path d="M0.8 0.8 L5 6.2 L9.2 0.8 Z" fill="#888" stroke="#888" stroke-width="1" stroke-linejoin="round"/></svg>

<!-- ============ TASKBAR ============ -->
<div id="taskbar" class="a"></div>
<!--TASKBAR--><div class="a" style="left:0;top:1032px;width:1920px;height:1px;background:#b9c9d0"></div>
<div class="a" style="left:740px;top:1033px;width:160px;height:47px;background:linear-gradient(90deg,rgba(240,205,230,0) 0%,rgba(240,205,230,0.75) 30%,rgba(242,210,228,0.8) 55%,rgba(240,205,230,0) 100%)"></div>
<svg style="left:20px;top:1037px" width="28" height="32">
<defs><linearGradient id="fl" x1="0" y1="0" x2="0" y2="1"><stop offset="0" stop-color="#f15a3a"/><stop offset="0.6" stop-color="#f7a33b"/><stop offset="1" stop-color="#f9c74f"/></linearGradient></defs>
<path d="M10 6 Q16 8 18 14 Q19 19 14 21 H4 Q2 16 5 12 Q7 9 10 6 Z" fill="url(#fl)"/>
<path d="M3 20 H21 Q20 24 14 25 L13 30 H10 L9 25 Q4 24 3 20 Z" fill="#3f8ef0"/>
<circle cx="18.5" cy="8.5" r="8" fill="#c42b1c"/>
<text x="18.5" y="12.5" text-anchor="middle" font-family="Liberation Sans" font-size="11" fill="#fff">1</text>
</svg>
<div class="t" style="left:51px;top:1041.54px;font-size:12px;color:#1b1b1b;">Olympic Games</div>
<div class="t" style="left:51px;top:1057.84px;font-size:12px;color:#5d5d5d;">Today's updates</div>
<svg style="left:705px;top:1045px" width="23" height="23">
<defs><linearGradient id="wg" x1="0" y1="0" x2="1" y2="1"><stop offset="0" stop-color="#5fc8f7"/><stop offset="1" stop-color="#0a74d6"/></linearGradient></defs>
<rect x="0" y="0" width="10.8" height="10.8" fill="url(#wg)"/><rect x="12.2" y="0" width="10.8" height="10.8" fill="url(#wg)"/>
<rect x="0" y="12.2" width="10.8" height="10.8" fill="url(#wg)"/><rect x="12.2" y="12.2" width="10.8" height="10.8" fill="url(#wg)"/></svg>
<div class="a" style="left:742px;top:1041px;width:218px;height:30px;border-radius:15px;background:rgba(255,255,255,0.78);border:1px solid #cfd3d8"></div>
<svg style="left:753px;top:1047px" width="16" height="17"><circle cx="6.5" cy="6.5" r="5.3" stroke="#1b1b1b" stroke-width="1.6" fill="none"/><path d="M10.5 10.5 L15 15" stroke="#1b1b1b" stroke-width="1.7"/></svg>
<div class="t" style="left:778.3px;top:1050.00px;font-size:13px;color:#5b5b5b;letter-spacing:-0.2px">Search</div>
<svg style="left:911px;top:1044px" width="46" height="26">
<path d="M0 24 L14 6 Q16 4 18 6 L30 16 L34 22 L28 25 Z" fill="#4a6fb0"/>
<path d="M13 7 Q16 3 19 7 L17 9 L15 8 Z" fill="#fff"/>
<path d="M0 24 Q20 18 40 24 L38 26 H2 Z" fill="#8aa845"/>
<circle cx="32" cy="10" r="5" fill="#f4a6c7"/><circle cx="38" cy="17" r="5" fill="#f09abb"/><circle cx="27" cy="18" r="3.5" fill="#f7b6d0"/>
</svg>
<svg style="left:973px;top:1045px" width="24" height="23"><rect x="7" y="0" width="17" height="15" fill="#e9e9e9" stroke="#cfcfcf" stroke-width="0.5"/><rect x="0" y="7" width="17" height="16" fill="#1f1f1f"/><rect x="7" y="7" width="10" height="8" fill="#7a7a7a"/></svg>
<svg style="left:1017px;top:1044.5px" width="25" height="23">
<defs><linearGradient id="cp1" x1="0" y1="0" x2="0" y2="1"><stop offset="0" stop-color="#19a6f5"/><stop offset="0.55" stop-color="#4cb070"/><stop offset="1" stop-color="#f4d200"/></linearGradient>
<linearGradient id="cp2" x1="0" y1="0" x2="0" y2="1"><stop offset="0" stop-color="#b44df2"/><stop offset="0.5" stop-color="#f2558a"/><stop offset="1" stop-color="#fdaa55"/></linearGradient></defs>
<path d="M15 0.3 Q17.5 0.3 18.3 2.5 L19.5 6.8 H14 Z" fill="#1f4fd6"/>
<path d="M6 16 H9.5 L11 21.8 Q8.2 21.8 7.3 19.2 Z" fill="#f05a30"/>
<path d="M5 2 Q5.8 0.3 8 0.3 H15.5 Q17 0.3 16.5 2 L9.5 16 H2 Q0 16 0.5 14 Z" fill="url(#cp1)"/>
<path d="M14.5 6.8 H22 Q24.2 6.8 23.6 9 L19.8 20.2 Q19.2 21.8 17.5 21.8 H9.5 Q10.5 20 11 18 Z" fill="url(#cp2)"/>
</svg>
<svg style="left:1061px;top:1045px" width="24" height="22">
<path d="M0 2 Q0 0 2 0 H8 L10 2 H22 Q24 2 24 4 V6 H0 Z" fill="#e8a317"/>
<rect x="0" y="5" width="24" height="17" rx="1.5" fill="#ffc83d"/>
<rect x="7" y="15" width="10" height="4" rx="1" fill="#1f6fd1"/></svg>
<svg style="left:1104px;top:1044px" width="25" height="25">
<defs><linearGradient id="eg1" x1="0" y1="1" x2="1" y2="0"><stop offset="0" stop-color="#0b4fa0"/><stop offset="0.55" stop-color="#1a8fdc"/><stop offset="1" stop-color="#52d66b"/></linearGradient></defs>
<circle cx="12.5" cy="12.5" r="12" fill="url(#eg1)"/>
<path d="M11 24.5 Q5 21 6 15 Q7 10.5 12.5 10.5 Q17 10.5 18 14 Q19 17 15.5 18 Q20 20 23.5 17.5 Q21 24 13 24.7 Z" fill="#1366bb"/>
<path d="M12 13 Q9 13 9 16 Q9 19 14 19.5 Q19 20 22.5 18 L24.3 15.5 Q22 18.5 17 17.5 Q14.5 17 14 15.5 Q13.5 13 12 13 Z" fill="#cfe8f3"/>
</svg>
<svg style="left:1149px;top:1045px" width="23" height="23">
<path d="M7 4 Q7 0 11.5 0 Q16 0 16 4" stroke="#1c4f8f" stroke-width="1.6" fill="none"/>
<rect x="0" y="4" width="23" height="19" rx="3" fill="#1c4f8f"/>
<rect x="7" y="9" width="4" height="4" fill="#f35325"/><rect x="12" y="9" width="4" height="4" fill="#81bc06"/>
<rect x="7" y="14" width="4" height="4" fill="#05a6f0"/><rect x="12" y="14" width="4" height="4" fill="#ffba08"/></svg>
<div class="a" style="left:1186px;top:1037px;width:38px;height:38px;border-radius:4px;background:rgba(255,255,255,0.5);border:1px solid rgba(255,255,255,0.6)"></div>
<svg style="left:1193px;top:1045px" width="24" height="24">
<path d="M12 0 A12 12 0 0 1 22.4 6 H12 Z" fill="#ea4335"/>
<path d="M12 0 A12 12 0 0 0 1.6 6 L6.8 15 L12 6 H22.4 A12 12 0 0 0 12 0 Z" fill="#ea4335"/>
<path d="M1.6 6 A12 12 0 0 0 12 24 L17.2 15 A6 6 0 0 1 6.8 15 Z" fill="#34a853"/>
<path d="M22.4 6 A12 12 0 0 1 12 24 L17.2 15 A6 6 0 0 0 12 6 Z" fill="#fbbc04"/>
<circle cx="12" cy="12" r="5.5" fill="#fff"/><circle cx="12" cy="12" r="4.3" fill="#4285f4"/></svg>
<svg style="left:1207px;top:1038px" width="16" height="16"><circle cx="8" cy="8" r="7.5" fill="#fff"/><circle cx="8" cy="8" r="6.3" fill="#1a8fd8"/><circle cx="7.5" cy="8.5" r="3.5" fill="#fff"/><path d="M7.5 5.5 V11.5" stroke="#1a8fd8" stroke-width="1"/></svg>
<div class="a" style="left:1197px;top:1072px;width:16px;height:3px;border-radius:2px;background:#0067c0"></div>
<svg style="left:1720px;top:1052px" width="12" height="8"><path d="M1 7 L6 1.5 L11 7" stroke="#1b1b1b" stroke-width="1.3" fill="none"/></svg>
<svg style="left:1749px;top:1048px" width="18" height="16"><path d="M4.5 13 Q1 13 1 10 Q1 7.3 4 7 Q4.8 3 9 3 Q12.5 3 13.8 6.5 Q16.8 7 16.8 10 Q16.8 13 13.5 13 Z" stroke="#2a2a2a" stroke-width="1" fill="#c4c4c4"/><path d="M2.5 1.5 L15.5 15" stroke="#1b1b1b" stroke-width="1.1"/></svg>
<svg style="left:1781px;top:1047px" width="18" height="18"><path d="M11.5 2 H1.6 V13.5 H11.5" stroke="#1b1b1b" stroke-width="1.1" fill="none"/><path d="M5 16 H12" stroke="#1b1b1b" stroke-width="1.1"/><path d="M8 13.5 V16" stroke="#1b1b1b" stroke-width="1"/><rect x="12.3" y="1" width="3.6" height="5.6" rx="1.4" stroke="#1b1b1b" stroke-width="1" fill="none"/><path d="M14.1 6.6 V16.5" stroke="#1b1b1b" stroke-width="1.1"/></svg>
<svg style="left:1806px;top:1048px" width="17" height="16"><path d="M1 5.5 H4 L8 2 V14 L4 10.5 H1 Z" stroke="#1b1b1b" stroke-width="1.1" fill="none"/><path d="M10.5 5.5 Q12 8 10.5 10.5 M12.8 3.8 Q15.3 8 12.8 12.2 M15 2 Q18.5 8 15 14" stroke="#1b1b1b" stroke-width="1.1" fill="none"/></svg>
<div class="t" style="left:1872.3px;top:1041.88px;font-size:11.6px;color:#1b1b1b;">15:34</div>
<div class="t" style="left:1839px;top:1057.68px;font-size:11.6px;color:#1b1b1b;letter-spacing:0.25px">23-02-2026</div><!--/TASKBAR-->
</body></html>
